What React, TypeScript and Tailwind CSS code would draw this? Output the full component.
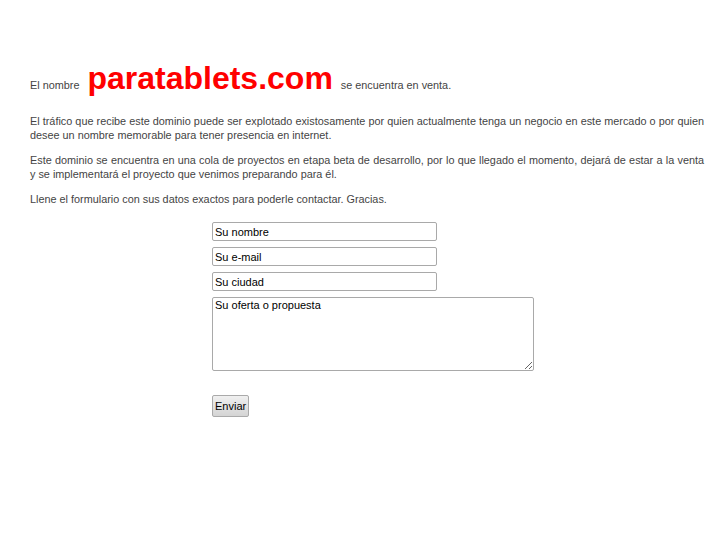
const fieldClass =
  "h-[19px] w-[225px] rounded-[2px] border border-[#a9a9a9] bg-white px-[2px] text-[11px] text-black outline-none placeholder:text-black";

export default function App() {
  return (
    <div className="min-h-[545px] bg-white pl-[30px] pr-[23px] pt-[58px] font-['Liberation_Sans',Arial,sans-serif] text-[10.85px] leading-[14px] text-[#444]">
      <div className="flex items-baseline">
        <span>El nombre</span>
        <span className="ml-[8px] mr-[8px] text-[32px] leading-[40px] font-bold text-[#ff0000]">
          paratablets.com
        </span>
        <span>se encuentra en venta.</span>
      </div>

      <div className="mt-[16px] space-y-[11px] text-justify">
        <p>
          El tráfico que recibe este dominio puede ser explotado existosamente por quien
          actualmente tenga un negocio en este mercado o por quien desee un nombre memorable
          para tener presencia en internet.
        </p>
        <p>
          Este dominio se encuentra en una cola de proyectos en etapa beta de desarrollo, por lo
          que llegado el momento, dejará de estar a la venta y se implementará el proyecto que
          venimos preparando para él.
        </p>
        <p>Llene el formulario con sus datos exactos para poderle contactar. Gracias.</p>
      </div>

      <form className="ml-[182px] mt-[16px] flex flex-col items-start gap-[6px]">
        <input className={fieldClass} placeholder="Su nombre" />
        <input className={fieldClass} placeholder="Su e-mail" />
        <input className={fieldClass} placeholder="Su ciudad" />
        <textarea
          className="h-[74px] w-[322px] rounded-[2px] border border-[#a9a9a9] bg-white px-[2px] py-[1px] text-[11px] leading-[13px] text-black outline-none placeholder:text-black"
          placeholder="Su oferta o propuesta"
        />
        <button
          type="button"
          className="mt-[18px] h-[22px] rounded-[2px] border border-[#aaa] bg-gradient-to-b from-[#f0f0f0] to-[#d4d4d4] px-[2px] text-[11px] text-black"
        >
          Enviar
        </button>
      </form>
    </div>
  );
}
